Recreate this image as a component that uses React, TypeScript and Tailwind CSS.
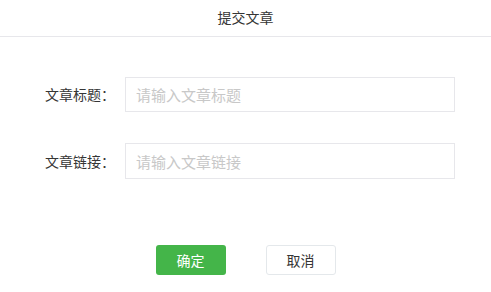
export default function App() {
  return (
    <div className="w-[491px] h-[292px] bg-white text-[14px] text-[#333] font-['Noto_Sans_CJK_SC','Noto_Sans',sans-serif]">
      <div className="h-[37px] border-b border-[#e7e7eb] flex items-center justify-center">
        <span className="text-[14px] text-[#353535] -mt-[2px]">提交文章</span>
      </div>

      <div className="pt-[40px] flex flex-col gap-[31px]">
        <div className="flex items-center">
          <label className="w-[115px] text-right text-[#353535]">文章标题：</label>
          <input
            className="ml-[10px] w-[330px] h-[35px] border border-[#e7e7eb] px-[10px] text-[15px] outline-none placeholder:text-[#c8c8c8]"
            placeholder="请输入文章标题"
          />
        </div>
        <div className="flex items-center">
          <label className="w-[115px] text-right text-[#353535]">文章链接：</label>
          <input
            className="ml-[10px] w-[330px] h-[36px] border border-[#e7e7eb] px-[10px] text-[15px] outline-none placeholder:text-[#c8c8c8]"
            placeholder="请输入文章链接"
          />
        </div>
      </div>

      <div className="mt-[66px] flex justify-center gap-[40px]">
        <button className="w-[70px] h-[30px] rounded-[3px] bg-[#44b549] text-white text-[14px]">确定</button>
        <button className="w-[70px] h-[30px] rounded-[3px] bg-white border border-[#e4e8eb] text-[#353535] text-[14px]">取消</button>
      </div>
    </div>
  );
}
